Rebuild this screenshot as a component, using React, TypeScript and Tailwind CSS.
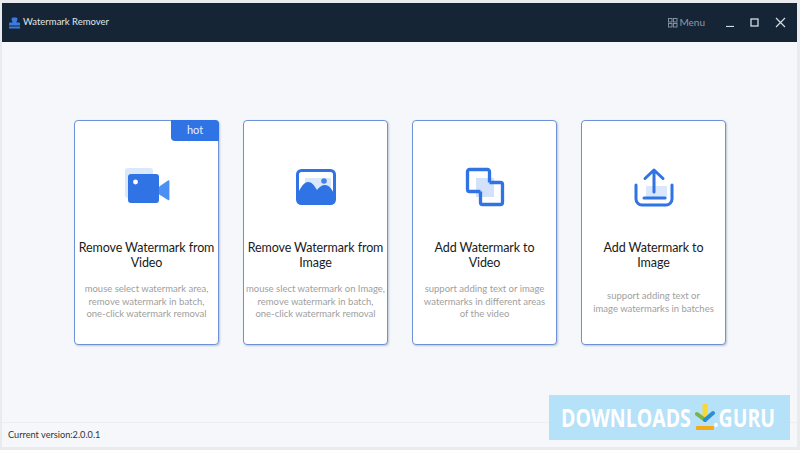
import type { ReactNode } from "react";

type Feature = {
  title: string[];
  lines: string[];
  icon: ReactNode;
  hot?: boolean;
  textGap: string;
};

const VideoIcon = () => (
  <svg width="46" height="40" viewBox="0 0 46 40">
    <rect x="1" y="1" width="28" height="30" rx="3" fill="#dbe8fb" />
    <rect x="4" y="7" width="31" height="29" rx="3" fill="#2f73e4" />
    <circle cx="11.5" cy="15" r="2.4" fill="#fff" />
    <path d="M36 19l8-5.500c.8-.5 1.400 0 1.400.8v18c0 .9-.7 1.300-1.400.8L36 28c-.8-.6-1-1-1-1.800v-5.400c0-.8.200-1.300 1-1.800z" fill="#4a90f5" />
  </svg>
);

const ImageIcon = () => (
  <svg width="40" height="36" viewBox="0 0 40 36">
    <rect x="9" y="9" width="26" height="18" fill="#dbe8fb" />
    <circle cx="28" cy="12" r="2.800" fill="#3f84ec" />
    <path d="M2 24c3-6 6-11 10-11s6 3 9 8c2-3 5-5 8-5 4 0 7 4 9 9v6a3 3 0 0 1-3 3H5a3 3 0 0 1-3-3z" fill="#2f73e4" />
    <rect x="1.500" y="1.500" width="37" height="33" rx="4" fill="none" stroke="#2f73e4" strokeWidth="3" />
  </svg>
);

const CopyIcon = () => (
  <svg width="40" height="40" viewBox="0 0 40 40" fill="none">
    <rect x="11" y="11" width="18" height="19" fill="#d3e2fa" />
    <path d="M24.500 15.500V4.500a2 2 0 0 0-2-2H4.500a2 2 0 0 0-2 2v18a2 2 0 0 0 2 2h11" stroke="#2f73e4" strokeWidth="3.300" strokeLinejoin="round" />
    <path d="M24.500 15.500h11a2 2 0 0 1 2 2v18a2 2 0 0 1-2 2h-18a2 2 0 0 1-2-2v-11" stroke="#2f73e4" strokeWidth="3.300" strokeLinejoin="round" />
  </svg>
);

const UploadIcon = () => (
  <svg width="40" height="40" viewBox="0 0 40 40">
    <rect x="12" y="19" width="21" height="13" fill="#dbe8fb" />
    <path d="M20 25V3M11 11.500L20 3l9 8.500" fill="none" stroke="#2f73e4" strokeWidth="3" strokeLinecap="round" strokeLinejoin="round" />
    <path d="M2 18v14a6 6 0 0 0 6 6h24a6 6 0 0 0 6-6V18" fill="none" stroke="#2f73e4" strokeWidth="3" strokeLinecap="round" />
    <path d="M10 31h21" fill="none" stroke="#2f73e4" strokeWidth="3" strokeLinecap="round" />
  </svg>
);

const features: Feature[] = [
  {
    title: ["Remove Watermark from", "Video"],
    lines: ["mouse select watermark area,", "remove watermark in batch,", "one-click watermark removal"],
    icon: <VideoIcon />,
    hot: true,
    textGap: "mt-[13px]",
  },
  {
    title: ["Remove Watermark from", "Image"],
    lines: ["mouse slect watermark on Image,", "remove watermark in batch,", "one-click watermark removal"],
    icon: <ImageIcon />,
    textGap: "mt-[13px]",
  },
  {
    title: ["Add Watermark to", "Video"],
    lines: ["support adding text or image", "watermarks in different areas", "of the video"],
    icon: <CopyIcon />,
    textGap: "mt-[13px]",
  },
  {
    title: ["Add Watermark to", "Image"],
    lines: ["support adding text or", "image watermarks in batches"],
    icon: <UploadIcon />,
    textGap: "mt-[20px]",
  },
];

function FeatureCard({ feature }: { feature: Feature }) {
  return (
    <div className="relative flex h-[225px] w-[145px] flex-col items-center rounded-[4px] border border-[#6d93d6] bg-white pt-[46px] shadow-[1px_1px_2px_rgba(90,110,150,0.35)]">
      {feature.hot && (
        <div className="absolute right-[-1px] top-[-1px] flex h-[21px] w-[48px] items-center justify-center rounded-bl-[4px] rounded-tr-[4px] bg-[#2f73e4] text-[11px] text-[#e8f0fd]">
          hot
        </div>
      )}
      <div className="flex h-[40px] items-center justify-center">{feature.icon}</div>
      <div className="mt-[33px] text-center text-[12.5px] leading-[15px] tracking-[-0.1px] text-[#1a1a1a]">
        {feature.title.map((t) => (
          <div key={t} className="whitespace-nowrap">{t}</div>
        ))}
      </div>
      <div className={`${feature.textGap} text-center text-[9.5px] leading-[12.7px] text-[#a0a0a0]`}>
        {feature.lines.map((l) => (
          <div key={l} className="whitespace-nowrap">{l}</div>
        ))}
      </div>
    </div>
  );
}

export default function App() {
  return (
    <div className="relative h-[450px] w-[800px] overflow-hidden bg-[#e9ebee] pb-[3px] pl-[2px] pr-[3px] pt-[3px] font-['Lato','Roboto',sans-serif]">
      <div className="flex h-full flex-col bg-[#f5f7fa]">
        {/* Title bar */}
        <div className="flex h-[39px] shrink-0 items-center bg-[#152536] pl-[7px] pr-[11px]">
          <svg width="11" height="12" viewBox="0 0 11 12">
            <path d="M4 .5h3a1.500 1.500 0 0 1 1.500 1.500c0 1.500-1 2-1 3.500h2.500a1 1 0 0 1 1 1V8.500H0V6.500a1 1 0 0 1 1-1h2.500c0-1.500-1-2-1-3.500A1.500 1.500 0 0 1 4 .5z" fill="#3b7be0" />
            <rect x="0" y="9.500" width="11" height="2" fill="#3b7be0" />
          </svg>
          <span className="ml-[3px] text-[9.5px] text-[#dfe5ec]">Watermark Remover</span>
          <div className="ml-auto flex items-center text-[#8d99a6]">
            <svg width="10" height="10" viewBox="0 0 10 10" fill="none" stroke="currentColor" strokeWidth="0.9">
              <rect x="0.5" y="0.500" width="3.500" height="3.500" />
              <rect x="5.500" y="0.500" width="3.500" height="3.500" />
              <rect x="0.500" y="5.500" width="3.500" height="3.500" />
              <rect x="5.500" y="5.500" width="3.500" height="3.500" />
            </svg>
            <span className="ml-[1px] text-[10px]">Menu</span>
          </div>
          <svg className="ml-[21px]" width="9" height="9" viewBox="0 0 9 9">
            <path d="M0 8.500h8" stroke="#d5dbe2" strokeWidth="1.200" />
          </svg>
          <svg className="ml-[15px]" width="9" height="9" viewBox="0 0 9 9" fill="none">
            <rect x="1" y="1" width="7" height="7" stroke="#d5dbe2" strokeWidth="1.300" />
          </svg>
          <svg className="ml-[16px]" width="11" height="11" viewBox="0 0 11 11">
            <path d="M1 1l9 9M10 1l-9 9" stroke="#d5dbe2" strokeWidth="1.200" />
          </svg>
        </div>

        {/* Feature cards */}
        <div className="flex flex-1 gap-[24px] pl-[72px] pt-[78px]">
          {features.map((f) => (
            <FeatureCard key={f.title.join(" ")} feature={f} />
          ))}
        </div>

        {/* Status bar */}
        <div className="flex h-[25px] shrink-0 items-center border-t border-[#eceef1] pl-[6px] text-[9.2px] text-[#333]">
          Current version:2.0.0.1
        </div>
      </div>

      {/* Site watermark */}
      <div className="absolute left-[549px] top-[395px] flex h-[45px] w-[241px] items-center bg-[#aedef8]/90 pl-[12px] font-['Open_Sans',sans-serif] text-[25px] font-bold text-white">
        <span className="w-[129px] origin-left scale-x-[0.78] whitespace-nowrap">DOWNLOADS</span>
        <svg className="ml-[5px] shrink-0" width="20" height="28" viewBox="0 0 20 28">
          <path d="M10 1v11" stroke="#f6d936" strokeWidth="5" strokeLinecap="round" />
          <path d="M2 10l8 6" stroke="#7cb342" strokeWidth="4" strokeLinecap="round" />
          <path d="M18 9l-8 7" stroke="#2a8fd0" strokeWidth="4" strokeLinecap="round" />
          <rect x="1" y="22" width="18" height="4" rx="1" fill="#f5ab17" />
        </svg>
        <span className="ml-[-2px] origin-left scale-x-[0.78] whitespace-nowrap">.GURU</span>
      </div>
    </div>
  );
}
